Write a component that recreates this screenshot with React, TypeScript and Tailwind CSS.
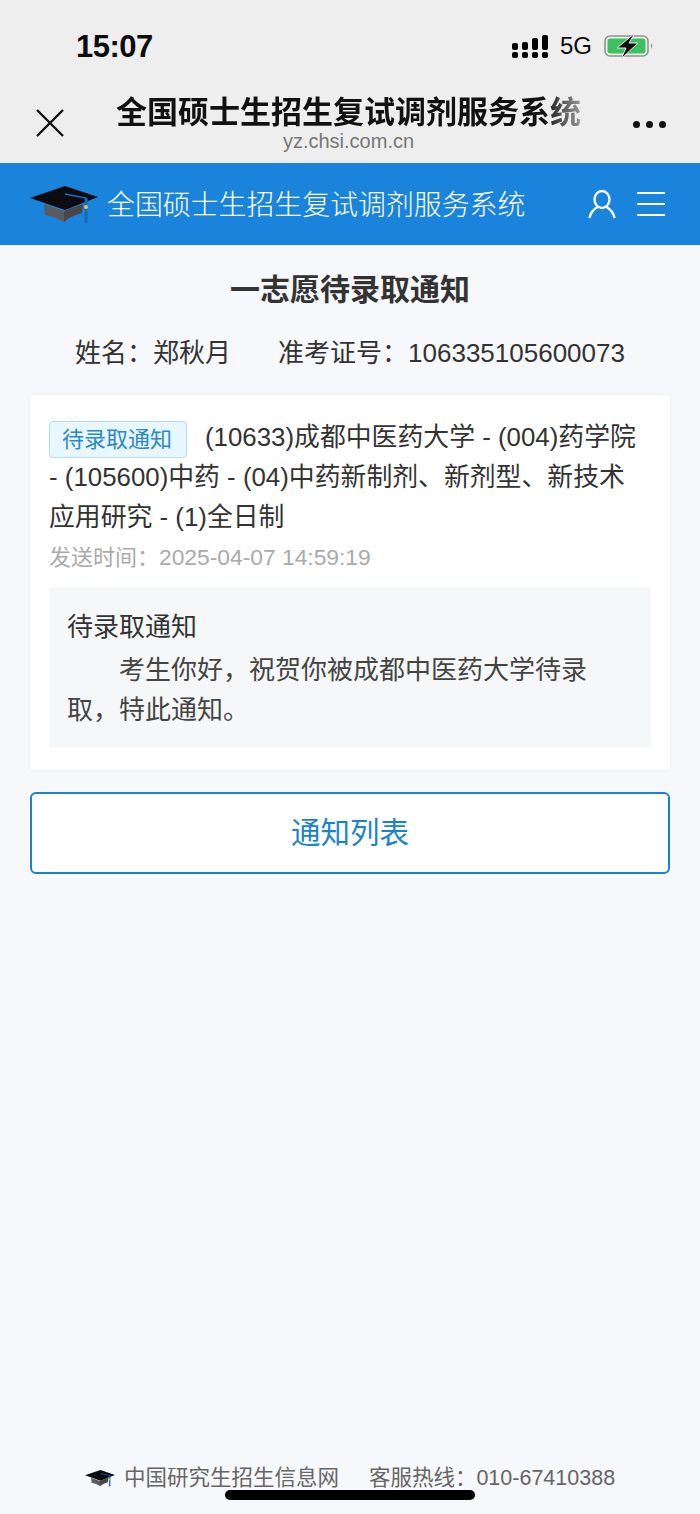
const sans = "font-['Liberation_Sans','Noto_Sans_CJK_SC',sans-serif]";

function Cap({ className }: { className?: string }) {
  return (
    <svg viewBox="0 0 68 40" className={className}>
      <path d="M14 20 L34 27 L53 20 L52 29 Q40 32 34 38 Q26 33 15 31 Z" fill="#5b5b5f" />
      <path d="M34 27 L53 20 L52 29 Q40 32 34 38 Z" fill="#47474b" />
      <path d="M0 14 L35 2 L68 13 L35 26 Z" fill="#0b0b10" />
      <path d="M35 10 L56 14 L56 22" fill="none" stroke="#1e6fc0" strokeWidth="1.5" />
      <rect x="54.5" y="14" width="3" height="25" fill="#1668b8" />
      <circle cx="56" cy="23" r="2" fill="#e8c64a" />
    </svg>
  );
}

function Signal() {
  const uppers = ["h-[7px]", "h-[8px]", "h-[12px]", "h-[15px]"];
  return (
    <div className="flex items-end gap-[4px]">
      {uppers.map((h, i) => (
        <div key={i} className="flex w-[6px] flex-col gap-[2px]">
          <div className={`${h} rounded-[2px] bg-black`} />
          <div className="h-[6px] rounded-[2px] bg-black" />
        </div>
      ))}
    </div>
  );
}

function Battery() {
  return (
    <svg viewBox="0 0 50 26" className="h-[26px] w-[50px]">
      <rect x="1" y="3" width="43" height="20" rx="5" fill="none" stroke="#8f948f" strokeWidth="1.6" />
      <rect x="3.5" y="5.5" width="38" height="15" rx="3" fill="#3cc15f" />
      <path d="M47 10 Q49.5 13 47 16 Z" fill="#8f948f" />
      <path d="M31 0 L13 15 L22 15 L17 26 L34 10 L25 10 Z" fill="#0c0c0c" stroke="#eeeeee" strokeWidth="1" />
    </svg>
  );
}

export default function App() {
  return (
    <div className={`${sans} relative flex min-h-[1514px] w-[700px] flex-col bg-[#f6f8fb]`}>
      {/* ios status + webview title */}
      <div className="h-[163px] shrink-0 bg-[#eeeeee]">
        <div className="flex h-[93px] items-start justify-between pl-[76px] pr-[46px] pt-[30px]">
          <span className="text-[31px] leading-[34px] font-bold tracking-[-0.5px] text-[#0c0c0c]">15:07</span>
          <div className="flex items-center gap-[12px] pt-[2px]">
            <Signal />
            <span className="text-[24px] leading-[28px] text-[#0c0c0c]">5G</span>
            <Battery />
          </div>
        </div>
        <div className="flex items-start justify-between pl-[36px] pr-[34px]">
          <svg viewBox="0 0 28 28" className="mt-[16px] h-[28px] w-[28px]">
            <path d="M1 1 L27 27 M27 1 L1 27" stroke="#111" strokeWidth="2.4" fill="none" />
          </svg>
          <div className="flex flex-col items-center">
            <span className="mt-[2px] bg-[linear-gradient(90deg,#111_92%,#999_100%)] bg-clip-text text-[31px] leading-[36px] font-semibold text-transparent">
              全国硕士生招生复试调剂服务系统
            </span>
            <span className="text-[20px] leading-[20px] text-[#777]">yz.chsi.com.cn</span>
          </div>
          <div className="mt-[28px] flex gap-[6px]">
            <div className="h-[7px] w-[7px] rounded-full bg-[#111]" />
            <div className="h-[7px] w-[7px] rounded-full bg-[#111]" />
            <div className="h-[7px] w-[7px] rounded-full bg-[#111]" />
          </div>
        </div>
      </div>

      {/* site header */}
      <div className="flex h-[82px] shrink-0 items-center justify-between bg-[#1a84dc] pl-[30px] pr-[35px]">
        <div className="flex items-center gap-[9px]">
          <Cap className="h-[40px] w-[68px]" />
          <span className="pt-[3px] text-[27.9px] leading-[36px] font-light text-white">全国硕士生招生复试调剂服务系统</span>
        </div>
        <div className="flex items-center gap-[20px]">
          <svg viewBox="0 0 30 30" className="h-[30px] w-[30px]" fill="none" stroke="#fff" strokeWidth="2.4">
            <ellipse cx="15" cy="10.5" rx="7.5" ry="8.5" />
            <path d="M2.5 29 C3.5 23 7 20 10.5 18 M19.5 18 C23 20 26.5 23 27.5 29" />
          </svg>
          <div className="flex w-[28px] flex-col gap-[9px]">
            <div className="h-[2px] bg-white" />
            <div className="h-[2px] bg-white" />
            <div className="h-[2px] bg-white" />
          </div>
        </div>
      </div>

      {/* content */}
      <div className="flex flex-1 flex-col px-[30px]">
        <h1 className="mt-[26px] text-center text-[30px] leading-[38px] font-bold text-[#333]">一志愿待录取通知</h1>
        <div className="mt-[26px] flex justify-center gap-[47px] text-[26px] leading-[36px] text-[#333]">
          <span>姓名：郑秋月</span>
          <span>准考证号：106335105600073</span>
        </div>

        <div className="mt-[24px] rounded-[4px] bg-white px-[19px] pt-[22px] pb-[23px] shadow-[0_0_4px_rgba(0,0,0,0.06)]">
          <div className="pr-[12px] text-[25.85px] leading-[40px] text-[#333]">
            <span className="mr-[18px] inline-block h-[37px] w-[138px] translate-y-[4px] rounded-[4px] border border-[#b5dff5] bg-[#e8f6fd] pl-[12px] align-top text-[22px] leading-[35px] text-[#2b8ac6]">
              待录取通知
            </span>
            (10633)成都中医药大学 - (004)药学院 - (105600)中药 - (04)中药新制剂、新剂型、新技术应用研究 - (1)全日制
          </div>
          <div className="mt-[2px] text-[22px] leading-[36px] text-[#aaa]">
            发送时间：<span className="text-[22.8px]">2025-04-07 14:59:19</span>
          </div>
          <div className="mt-[11px] bg-[#f6f7f9] pl-[18px] pr-[50px] pt-[20px] pb-[17px] text-[26px] leading-[40px] text-[#444]">
            <div className="text-[#333]">待录取通知</div>
            <div className="mt-[3px] indent-[52px]">考生你好，祝贺你被成都中医药大学待录取，特此通知。</div>
          </div>
        </div>

        <div className="mt-[22px] flex h-[82px] items-center justify-center rounded-[6px] border-2 border-[#1a84c8] bg-white text-[29.5px] text-[#1a84c8]">
          通知列表
        </div>

        <div className="mt-auto mb-[21px] flex items-center justify-center text-[21.5px] leading-[30px] text-[#666]">
          <Cap className="mr-[9px] h-[18px] w-[30px]" />
          <span>中国研究生招生信息网</span>
          <span className="ml-[30px]">客服热线：010-67410388</span>
        </div>
      </div>

      {/* home indicator */}
      <div className="absolute bottom-[14px] left-[225px] h-[10px] w-[250px] rounded-full bg-black" />
    </div>
  );
}
